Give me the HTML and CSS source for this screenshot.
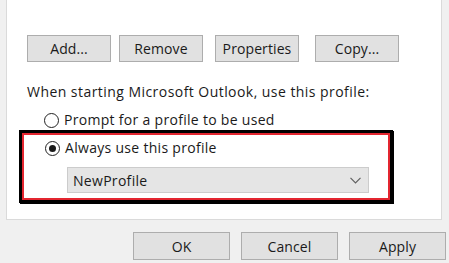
FILE: index.html
```html
<!DOCTYPE html>
<html>
<head>
<meta charset="utf-8">
<link rel="stylesheet" href="styles.css">
</head>
<body>
<div class="panel">
  <div class="btn-row">
    <button class="btn">Add...</button>
    <button class="btn">Remove</button>
    <button class="btn btn-props">Properties</button>
    <button class="btn btn-copy">Copy...</button>
  </div>
  <div class="label">When starting Microsoft Outlook, use this profile:</div>
  <div class="radio-row first"><span class="radio"></span><span>Prompt for a profile to be used</span></div>
  <div class="highlight">
    <div class="highlight-inner">
      <div class="radio-row"><span class="radio checked"></span><span>Always use this profile</span></div>
      <div class="combo">
        <span>NewProfile</span>
        <svg class="chev" width="11" height="7" viewBox="0 0 11 7"><path d="M0.5 0.8 L5.5 5.8 L10.5 0.8" fill="none" stroke="#606060" stroke-width="1.2"/></svg>
      </div>
    </div>
  </div>
</div>
<div class="footer">
  <button class="btn btn-foot">OK</button>
  <button class="btn btn-foot">Cancel</button>
  <button class="btn btn-foot">Apply</button>
</div>
</body>
</html>
```
FILE: styles.css
```css
html, body {
  margin: 0;
  padding: 0;
}
body {
  background: #f0f0f0;
  font-family: "Open Sans", "Noto Sans", sans-serif;
  font-size: 14px;
  letter-spacing: 0.3px;
  color: #1a1a1a;
  width: 449px;
  height: 263px;
  overflow: hidden;
}
.panel {
  margin-left: 6px;
  width: 436px;
  height: 220px;
  box-sizing: border-box;
  background: #fff;
  border: 1px solid #dadada;
  border-top: none;
  padding-top: 35px;
  padding-left: 20px;
}
.btn-row {
  display: flex;
  gap: 8px;
}
.btn {
  font-family: inherit;
  font-size: 14px;
  letter-spacing: 0.1px;
  color: #1a1a1a;
  background: #e1e1e1;
  border: 1px solid #adadad;
  border-radius: 0;
  width: 84px;
  height: 27px;
  padding: 0;
  margin: 0;
  line-height: 25px;
}
.btn-props { margin-left: 4px; }
.btn-copy { margin-left: 8px; }
.label {
  margin-top: 21px;
  line-height: 18px;
  letter-spacing: 0.45px;
}
.radio-row {
  display: flex;
  align-items: center;
  gap: 5px;
  height: 20px;
  line-height: 20px;
}
.radio-row.first {
  margin-top: 9px;
  margin-left: 17px;
}
.radio {
  width: 13px;
  height: 13px;
  border: 1px solid #222;
  border-radius: 50%;
  background: #fff;
  box-sizing: content-box;
  position: relative;
  flex: none;
}
.radio.checked::after {
  content: "";
  position: absolute;
  left: 3px;
  top: 3px;
  width: 7px;
  height: 7px;
  border-radius: 50%;
  background: #1a1a1a;
}
.highlight {
  margin-left: -8px;
  width: 374px;
  height: 73px;
  box-sizing: border-box;
  border: 3px solid #000;
  box-shadow: 1px 1px 0 #000;
}
.highlight-inner {
  height: 100%;
  box-sizing: border-box;
  border: 2px solid #e32630;
  padding-left: 21px;
  padding-top: 3px;
}
.combo {
  margin-top: 9px;
  margin-left: 22px;
  width: 302px;
  height: 26px;
  box-sizing: border-box;
  background: #e5e5e5;
  border: 1px solid #cccccc;
  display: flex;
  align-items: center;
  justify-content: space-between;
  padding: 0 7px 0 5px;
}
.footer {
  display: flex;
  gap: 11px;
  margin-top: 12px;
  margin-left: 133px;
}
.btn-foot {
  width: 97px;
  height: 28px;
}
```
